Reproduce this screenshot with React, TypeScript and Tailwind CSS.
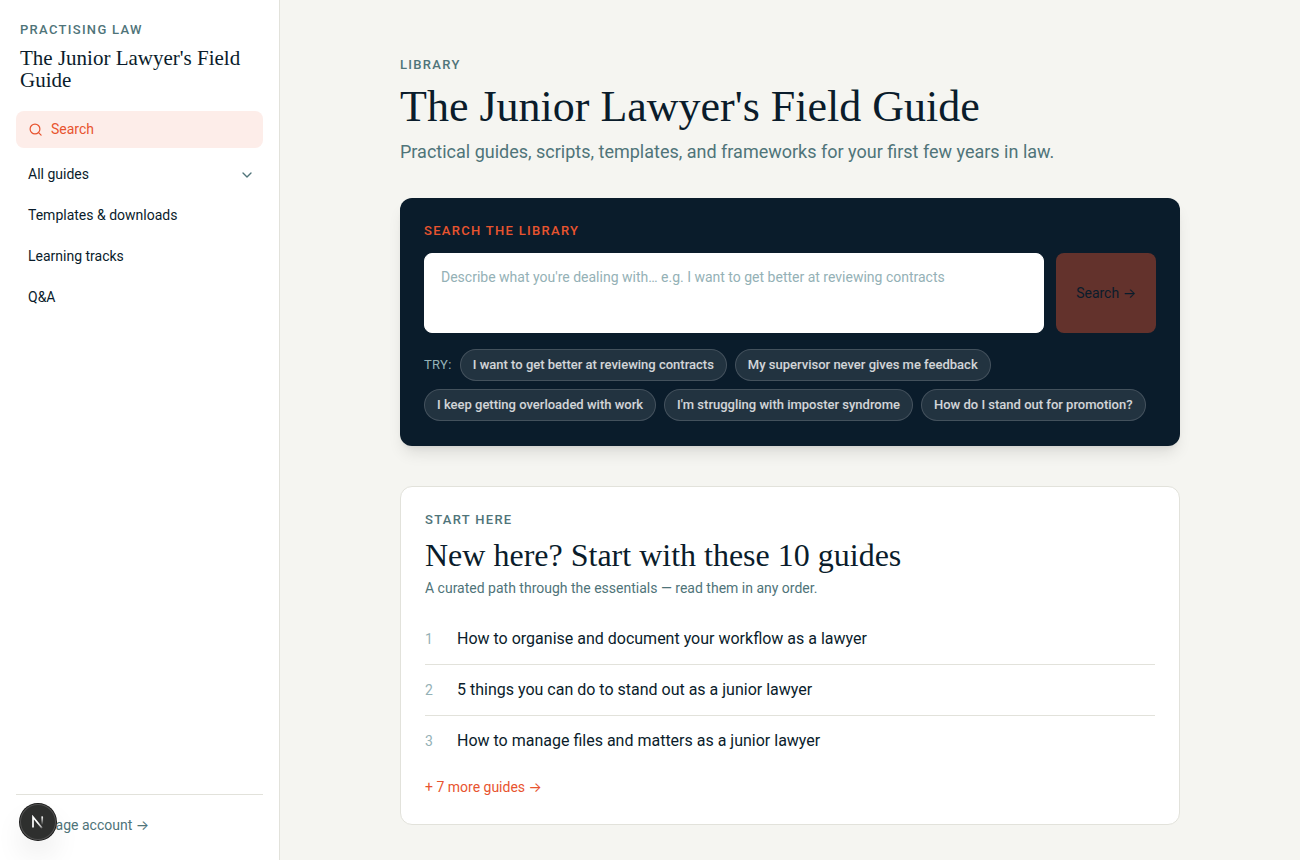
import React, { useState } from 'react';
import { ChevronDown } from 'lucide-react';

const navItems = ['Templates & downloads', 'Learning tracks', 'Q&A'];

const suggestions = [
  'I want to get better at reviewing contracts',
  'My supervisor never gives me feedback',
  'I keep getting overloaded with work',
  "I'm struggling with imposter syndrome",
  'How do I stand out for promotion?',
];

const starterGuides = [
  'How to organise and document your workflow as a lawyer',
  '5 things you can do to stand out as a junior lawyer',
  'How to manage files and matters as a junior lawyer',
];

function SearchIcon() {
  return (
    <svg width="15" height="15" viewBox="0 0 15 15" fill="none" stroke="currentColor" strokeWidth="1.2" strokeLinecap="round">
      <circle cx="7" cy="7" r="4.9" />
      <path d="M10.6 10.6l2.5 2.5" />
    </svg>
  );
}

function Sidebar() {
  return (
    <aside className="sticky top-0 flex h-screen w-[280px] shrink-0 flex-col border-r border-[#e2e2db] bg-white px-4 pt-5 pb-6">
      <div className="px-1">
        <p className="text-[13px] leading-5 font-medium tracking-widest text-[#4f7479] uppercase">Practising Law</p>
        <p className="mt-[7px] font-['Liberation_Serif',serif] text-[21px] leading-[22px]">
          The Junior Lawyer's Field Guide
        </p>
      </div>

      <nav className="mt-5 flex flex-col gap-1 text-sm">
        <a href="#search" className="mb-1 flex items-center gap-2 rounded-lg bg-[#fdede9] px-3 py-2 leading-[21px] text-[#e8542f]">
          <SearchIcon />
          Search
        </a>
        <button type="button" className="flex items-center justify-between py-2 pr-2 pl-3 leading-[21px]">
          All guides
          <ChevronDown size={16} strokeWidth={2} className="text-[#4f7479]" />
        </button>
        {navItems.map((item) => (
          <a key={item} href="#" className="px-3 py-2 leading-[21px]">
            {item}
          </a>
        ))}
      </nav>

      <div className="mt-auto border-t border-[#e2e2db] px-3 pt-5">
        <a href="#account" className="block text-sm leading-[21px] text-[#4f7479]">
          Manage account →
        </a>
      </div>
    </aside>
  );
}

function SearchPanel() {
  const [query, setQuery] = useState('');

  return (
    <section className="mt-8 rounded-xl bg-[#0a1c2b] px-6 pt-6 pb-[25px] shadow-lg">
      <label htmlFor="query" className="block text-[13px] leading-[18px] font-medium tracking-widest text-[#e8542f] uppercase">
        Search the library
      </label>
      <div className="mt-[13px] flex gap-3">
        <textarea
          id="query"
          value={query}
          onChange={(e) => setQuery(e.target.value)}
          placeholder="Describe what you're dealing with… e.g. I want to get better at reviewing contracts"
          className="h-20 min-w-0 flex-1 resize-none rounded-lg border border-white bg-white px-4 py-3 text-sm leading-[22px] text-[#0a1c2b] outline-none placeholder:text-[#94b1b6]"
        />
        <button
          type="submit"
          disabled={!query.trim()}
          className="rounded-lg bg-[#e8542f] px-5 text-sm text-[#0a1c2b] disabled:opacity-40"
        >
          Search →
        </button>
      </div>
      <div className="mt-4 flex flex-wrap items-center gap-2 text-[13px] leading-5">
        <span className="tracking-wide text-[#94b1b6]">TRY:</span>
        {suggestions.map((text) => (
          <button
            key={text}
            type="button"
            onClick={() => setQuery(text)}
            className="rounded-full border border-white/15 bg-white/10 px-3 py-[5px] font-medium text-white/80"
          >
            {text}
          </button>
        ))}
      </div>
    </section>
  );
}

function StartHere() {
  return (
    <section className="mt-10 rounded-xl border border-[#e2e2db] bg-white p-6">
      <p className="text-[13px] leading-[18px] font-medium tracking-widest text-[#4f7479] uppercase">Start here</p>
      <h2 className="mt-1.5 font-['Liberation_Serif',serif] text-[32px] leading-10 font-medium">
        New here? Start with these 10 guides
      </h2>
      <p className="mt-[3px] text-sm leading-5 text-[#4f7479]">A curated path through the essentials — read them in any order.</p>
      <ol className="mt-4 divide-y divide-[#e2e2db]">
        {starterGuides.map((title, index) => (
          <li key={title}>
            <a href="#" className="flex items-baseline py-3 leading-[26px]">
              <span className="w-8 text-sm text-[#94b1b6]">{index + 1}</span>
              <span>{title}</span>
            </a>
          </li>
        ))}
      </ol>
      <a href="#" className="mt-2.5 mb-0.5 block w-fit text-sm leading-[22px] text-[#e8542f]">
        + 7 more guides →
      </a>
    </section>
  );
}

// Next.js dev indicator
function DevBadge() {
  return (
    <button
      type="button"
      aria-label="Open Next.js Dev Tools"
      className="fixed bottom-5 left-5 flex size-9 items-center justify-center rounded-full bg-[#2e2f2e] shadow-[0_0_0_1px_#171717,inset_0_0_0_1px_#505050,0_16px_32px_-8px_rgba(0,0,0,0.24)]"
    >
      <svg width="14" height="14" viewBox="0 0 14 14" fill="none" strokeWidth="1.7">
        <path d="M2 12.6V2l9.2 11.2" stroke="url(#diagonal)" />
        <path d="M11.2 1.4v8.4" stroke="url(#stem)" />
        <defs>
          <linearGradient id="diagonal" x1="7" y1="8" x2="11.5" y2="13.5" gradientUnits="userSpaceOnUse">
            <stop stopColor="#fff" />
            <stop offset="0.7" stopColor="#fff" stopOpacity="0.6" />
            <stop offset="1" stopColor="#fff" stopOpacity="0" />
          </linearGradient>
          <linearGradient id="stem" x1="11.2" y1="1.4" x2="11.3" y2="10" gradientUnits="userSpaceOnUse">
            <stop stopColor="#fff" />
            <stop offset="1" stopColor="#fff" stopOpacity="0" />
          </linearGradient>
        </defs>
      </svg>
    </button>
  );
}

export default function App() {
  return (
    <div className="flex min-h-screen bg-[#f5f5f1] font-['Roboto','Inter',sans-serif] text-[#0a1c2b]">
      <Sidebar />
      <main className="min-w-0 flex-1 px-8 pt-14 pb-8">
        <div className="mx-auto max-w-[780px]">
          <header>
            <p className="text-[13px] leading-[18px] font-medium tracking-widest text-[#4f7479] uppercase">Library</p>
            <h1 className="mt-1.5 font-['Liberation_Serif',serif] text-[44px] leading-[54px] font-medium">
              The Junior Lawyer's Field Guide
            </h1>
            <p className="mt-1 text-lg leading-7 text-[#4f7479]">
              Practical guides, scripts, templates, and frameworks for your first few years in law.
            </p>
          </header>
          <SearchPanel />
          <StartHere />
        </div>
      </main>
      <DevBadge />
    </div>
  );
}
